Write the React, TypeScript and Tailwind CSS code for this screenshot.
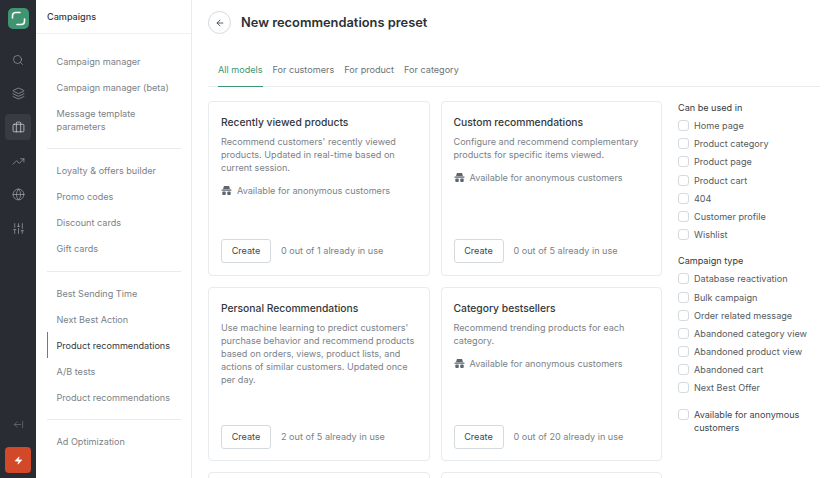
import React from 'react';
import { ArrowLeft, ArrowLeftFromLine, Briefcase, Globe, Layers, Search, SlidersVertical, TrendingUp, Zap } from 'lucide-react';

const HatIcon = () => (
  <svg width="11" height="11" viewBox="0 0 12 12" className="shrink-0 text-[#5f666d]" fill="currentColor">
    <path d="M3.2 1h5.6l1 3.6H2.2z" />
    <rect x="0.5" y="5" width="11" height="1.2" rx="0.4" />
    <rect x="1.4" y="7.2" width="3.8" height="3.6" rx="1" />
    <rect x="6.8" y="7.2" width="3.8" height="3.6" rx="1" />
  </svg>
);

const Logo = () => (
  <div className="w-[21px] h-[21px] rounded-[5px] bg-[#3f9472] flex items-center justify-center">
    <svg width="15" height="15" viewBox="0 0 15 15" fill="none" stroke="white" strokeWidth="1.6" strokeLinecap="round">
      <path d="M1.5 7V4.7A3.2 3.2 0 0 1 4.7 1.5H9" />
      <path d="M13.5 8v2.3a3.2 3.2 0 0 1-3.2 3.2H6" />
    </svg>
  </div>
);

const navGroups = [
  ['Campaign manager', 'Campaign manager (beta)', 'Message template parameters'],
  ['Loyalty & offers builder', 'Promo codes', 'Discount cards', 'Gift cards'],
  ['Best Sending Time', 'Next Best Action', 'Product recommendations', 'A/B tests', 'Product recommendations'],
  ['Ad Optimization'],
];

const cards = [
  {
    title: 'Recently viewed products',
    text: "Recommend customers' recently viewed products. Updated in real-time based on current session.",
    anon: true,
    usage: '0 out of 1 already in use',
  },
  {
    title: 'Custom recommendations',
    text: 'Configure and recommend complementary products for specific items viewed.',
    anon: true,
    usage: '0 out of 5 already in use',
  },
  {
    title: 'Personal Recommendations',
    text: "Use machine learning to predict customers' purchase behavior and recommend products based on orders, views, product lists, and actions of similar customers. Updated once per day.",
    anon: false,
    usage: '2 out of 5 already in use',
  },
  {
    title: 'Category bestsellers',
    text: 'Recommend trending products for each category.',
    anon: true,
    usage: '0 out of 20 already in use',
  },
];

const usedIn = ['Home page', 'Product category', 'Product page', 'Product cart', '404', 'Customer profile', 'Wishlist'];
const campaignTypes = [
  'Database reactivation',
  'Bulk campaign',
  'Order related message',
  'Abandoned category view',
  'Abandoned product view',
  'Abandoned cart',
  'Next Best Offer',
];

const Check = ({ label, dark }: { label: string; dark?: boolean }) => (
  <label className={`flex gap-[5px] leading-[13px] min-h-[18.2px] ${dark ? 'text-[#41474d]' : 'text-[#555b61]'}`}>
    <span className="w-[11px] h-[11px] mt-px shrink-0 rounded-[3px] border border-[#d5dade] bg-white" />
    <span>{label}</span>
  </label>
);

export default function App() {
  return (
    <div className="flex h-screen overflow-hidden bg-white text-[9.1px] font-['Inter',sans-serif]">
      {/* Rail */}
      <aside className="w-[36px] shrink-0 bg-[#292c33] flex flex-col items-center pt-[8px] pb-[5px] text-[#a5abb0]">
        <Logo />
        <div className="mt-[18px] flex flex-col items-center gap-[7.7px]">
          <div className="w-[26px] h-[26px] flex items-center justify-center"><Search size={12} strokeWidth={1.25} /></div>
          <div className="w-[26px] h-[26px] flex items-center justify-center"><Layers size={13} strokeWidth={1.25} /></div>
          <div className="w-[26px] h-[26px] flex items-center justify-center rounded-[4px] bg-[#383b42] text-[#e3e5e7]"><Briefcase size={13} strokeWidth={1.25} /></div>
          <div className="w-[26px] h-[26px] flex items-center justify-center"><TrendingUp size={13} strokeWidth={1.25} /></div>
          <div className="w-[26px] h-[26px] flex items-center justify-center"><Globe size={13} strokeWidth={1.25} /></div>
          <div className="w-[26px] h-[26px] flex items-center justify-center"><SlidersVertical size={13} strokeWidth={1.25} /></div>
        </div>
        <div className="mt-auto mb-[17px] text-[#7f858b]"><ArrowLeftFromLine size={11} strokeWidth={1.25} /></div>
        <div className="w-[26px] h-[26px] rounded-[4px] bg-[#d2492a] flex items-center justify-center text-white">
          <Zap size={9} fill="currentColor" strokeWidth={1} />
        </div>
      </aside>

      {/* Section menu */}
      <nav className="w-[156px] shrink-0 border-r border-[#e8ebed]">
        <div className="h-[34px] pl-[11px] flex items-center border-b border-[#eef1f2] text-[#33383d] font-medium">Campaigns</div>
        <div className="pt-[14px] px-[10.5px]">
          {navGroups.map((group, i) => (
            <div key={i} className={i === 3 ? 'border-t border-[#e8ebed] mt-[8.5px] pt-[8.5px]' : i > 0 ? 'border-t border-[#e8ebed] mt-[9px] pt-[8.5px]' : ''}>
              {group.map((item, j) => {
                const active = i === 2 && j === 2;
                return (
                  <div
                    key={j}
                    className={`pl-[9px] py-[6.5px] leading-[13px] border-l-[1.5px] ${active ? 'border-[#3f9472] text-[#33383d]' : 'border-transparent text-[#7b8288]'}`}
                  >
                    {item}
                  </div>
                );
              })}
            </div>
          ))}
        </div>
      </nav>

      {/* Page */}
      <main className="flex-1 min-w-0 pl-[16px] pr-[16px]">
        <div className="h-[45px] flex items-center gap-[10px]">
          <button className="w-[23px] h-[23px] rounded-full border border-[#d5dade] flex items-center justify-center text-[#3a3f44]">
            <ArrowLeft size={10} />
          </button>
          <h1 className="text-[12.85px] font-semibold text-[#2c3136]">New recommendations preset</h1>
        </div>

        <div className="mt-[14px] h-[28px] flex items-stretch gap-[10px] pl-[10px] border-b border-[#e8ebed] text-[#6b7278]">
          <div className="flex items-center pb-[5px] border-b border-[#3f9472] -mb-px text-[#3f9472]">All models</div>
          <div className="flex items-center pb-[5px]">For customers</div>
          <div className="flex items-center pb-[5px]">For product</div>
          <div className="flex items-center pb-[5px]">For category</div>
        </div>

        <div className="mt-[14px] flex gap-[16px]">
          <div className="w-[454px] shrink-0 grid grid-cols-2 gap-[11px] auto-rows-[174.5px]">
            {cards.map((card) => (
              <div key={card.title} className="border border-[#e8ebed] rounded-[4px] p-[12px] pb-[11.5px] flex flex-col">
                <h3 className="text-[10.3px] font-medium text-[#33383d] leading-[14px] mt-px">{card.title}</h3>
                <p className="mt-[6px] leading-[13px] text-[#7b8288]">{card.text}</p>
                {card.anon && (
                  <div className="mt-[10px] flex items-center gap-[5px] leading-[13px] text-[#7b8288]">
                    <HatIcon />
                    <span>Available for anonymous customers</span>
                  </div>
                )}
                <div className="mt-auto flex items-center gap-[10px]">
                  <button className="w-[50px] h-[24px] rounded-[3px] border border-[#d5dade] text-[#41474d]">Create</button>
                  <span className="text-[#7b8288]">{card.usage}</span>
                </div>
              </div>
            ))}
            <div className="border border-[#e8ebed] rounded-[4px]" />
            <div className="border border-[#e8ebed] rounded-[4px]" />
          </div>

          <aside className="flex-1 min-w-0">
            <h4 className="leading-[13px] text-[#33383d] mb-[5px]">Can be used in</h4>
            {usedIn.map((label) => <Check key={label} label={label} />)}
            <h4 className="leading-[13px] text-[#33383d] mt-[8px] mb-[5px]">Campaign type</h4>
            {campaignTypes.map((label) => <Check key={label} label={label} />)}
            <div className="mt-[8px]"><Check label="Available for anonymous customers" dark /></div>
          </aside>
        </div>
      </main>
    </div>
  );
}
